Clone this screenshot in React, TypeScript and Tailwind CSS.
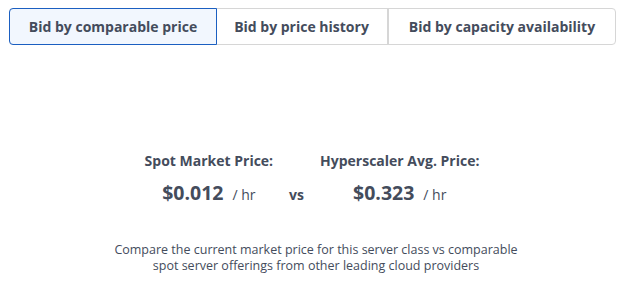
export default function App() {
  const tabs = [
    { label: "Bid by comparable price", w: "w-[208px]" },
    { label: "Bid by price history", w: "w-[173px]" },
    { label: "Bid by capacity availability", w: "flex-1" },
  ];
  return (
    <div className="w-[632px] h-[285px] bg-white text-[#444c5c]" style={{ fontFamily: '"Open Sans", "Noto Sans", sans-serif' }}>
      <div className="pt-2 pl-[9px]">
        <div className="flex w-[607px] h-[37px] rounded-[4px] border border-[#d6d6d6]">
          {tabs.map((t, i) => (
            <button
              key={t.label}
              type="button"
              className={
                i === 0
                  ? `-m-px ${t.w} shrink-0 rounded-l-[4px] border border-[#1b5fc1] bg-[#f2f7fe] text-[14px] font-bold`
                  : i === 1
                  ? `${t.w} shrink-0 border-r-2 border-[#d6d6d6] text-[14px] font-bold`
                  : `${t.w} text-[14px] font-bold`
              }
            >
              {t.label}
            </button>
          ))}
        </div>
      </div>
      <div className="mt-[106px] flex justify-center pr-[8px]">
        <div className="grid grid-cols-[auto_auto_auto] items-baseline">
          <div className="text-center text-[14px] font-bold leading-[20px]">Spot Market Price:</div>
          <div />
          <div className="text-center text-[14px] font-bold leading-[20px]">Hyperscaler Avg. Price:</div>
          <div className="mt-[10px] flex items-baseline justify-center">
            <span className="text-[19.5px] font-bold leading-[24px]">$0.012</span>
            <span className="ml-[9px] text-[14px]">/ hr</span>
          </div>
          <div className="mx-[16px] text-[14px] font-bold">vs</div>
          <div className="mt-[10px] flex items-baseline justify-center">
            <span className="text-[19.5px] font-bold leading-[24px]">$0.323</span>
            <span className="ml-[9px] text-[14px]">/ hr</span>
          </div>
        </div>
      </div>
      <p className="mx-auto mt-[37px] w-[424px] text-center text-[12.5px] leading-[16px]">
        Compare the current market price for this server class vs comparable spot server offerings from other leading cloud providers
      </p>
    </div>
  );
}
